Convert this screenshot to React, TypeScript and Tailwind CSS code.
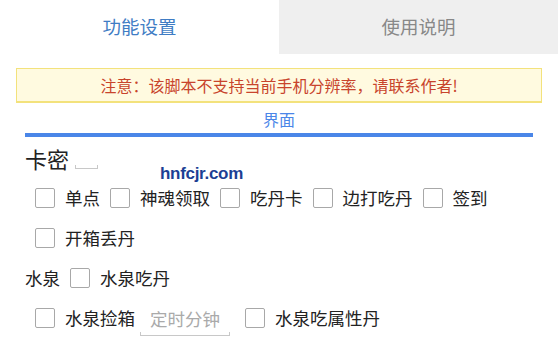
import { useState } from 'react';

const font = { fontFamily: '"Noto Sans CJK SC", "Noto Sans", sans-serif' };

function Check({ label, first }: { label: string; first?: boolean }) {
  const [on, setOn] = useState(false);
  return (
    <label className="flex items-center cursor-pointer">
      <span
        onClick={() => setOn(!on)}
        className={`ml-[10px] w-[20px] h-[20px] rounded-[2px] border-[1.5px] border-[#a8a8a8] bg-white ${on ? 'bg-[#4a86e8]' : ''}`}
      />
      <span className="ml-[10px] text-[17.5px] leading-none text-[#222]">{label}</span>
    </label>
  );
}

export default function App() {
  return (
    <div className="relative w-[558px] h-[340px] bg-white overflow-hidden" style={font}>
      {/* tabs */}
      <div className="grid grid-cols-2 h-[54px]">
        <div className="flex items-center justify-center text-[18.5px] text-[#3f7cc4]">功能设置</div>
        <div className="flex items-center justify-center text-[18.5px] text-[#888] bg-[#efefef]">使用说明</div>
      </div>

      <div className="px-4 pt-[14px]">
        <div className="h-[35px] flex items-center justify-center border border-b-2 border-[#f3e27c] bg-[#fffae0] text-[16px] text-[#c8442c]">
          注意：该脚本不支持当前手机分辨率，请联系作者!
        </div>

        <div className="mt-[5px] text-center text-[16px] leading-[22px] text-[#4a86e8]">界面</div>
        <div className="mt-[3px] mx-[9px] h-[4px] bg-[#4a86e8]" />

        <div className="px-[9px]">
          <div className="h-[41px] flex items-center">
            <span className="text-[22px] leading-none text-[#222]">卡密</span>
            <div className="ml-[6px] mt-[18px] w-[23px] h-[4px] border-x border-b border-[#c8c8c8]" />
          </div>

          <div className="h-[40px] flex items-center">
            <Check label="单点" />
            <Check label="神魂领取" />
            <Check label="吃丹卡" />
            <Check label="边打吃丹" />
            <Check label="签到" />
          </div>

          <div className="h-[40px] flex items-center">
            <Check label="开箱丢丹" />
          </div>

          <div className="h-[40px] flex items-center">
            <span className="text-[17.5px] leading-none text-[#222]">水泉</span>
            <Check label="水泉吃丹" />
          </div>

          <div className="h-[40px] flex items-center">
            <Check label="水泉捡箱" />
            <div className="ml-[5px] mt-[4px] flex flex-col w-[90px]">
              <input
                placeholder="定时分钟"
                className="h-[28px] pl-[10px] text-[17.5px] outline-none placeholder:text-[#aaa] bg-transparent"
                style={font}
              />
              <div className="h-[4px] border-x border-b border-[#c8c8c8]" />
            </div>
            <div className="ml-[5px]">
              <Check label="水泉吃属性丹" />
            </div>
          </div>
        </div>
      </div>

      {/* watermark */}
      <div
        className="absolute left-[160px] top-[161px] text-[17px] font-bold tracking-[-0.3px] text-[#1c3f94]"
        style={{ fontFamily: '"Liberation Sans", Arial, sans-serif' }}
      >
        hnfcjr.com
      </div>
    </div>
  );
}
